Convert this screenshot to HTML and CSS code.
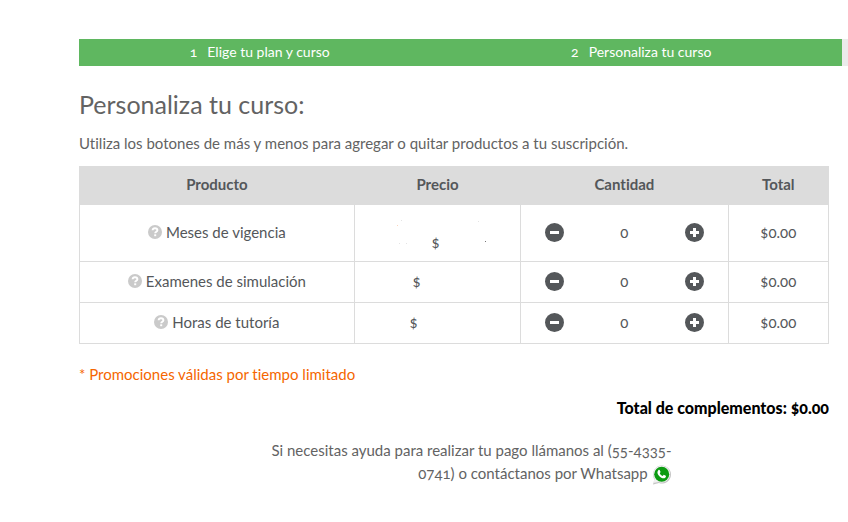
FILE: index.html
```html
<!DOCTYPE html>
<html lang="es">
<head>
<meta charset="utf-8">
<meta name="viewport" content="width=device-width, initial-scale=1">
<title>Personaliza tu curso</title>
<link rel="stylesheet" href="styles.css">
</head>
<body>
<svg class="sprite" aria-hidden="true">
  <symbol id="help" viewBox="0 0 14 14"><circle cx="7" cy="7" r="7" fill="#cacaca"/><path d="M4.6 5.3C4.7 3.8 5.8 3.2 7 3.2c1.400 0 2.400.8 2.400 2 0 1.500-2.200 1.500-2.200 3" fill="none" stroke="#fff" stroke-width="1.900"/><path d="M6.200 9.300h2v1.900h-2z" fill="#fff"/></symbol>
  <symbol id="minus" viewBox="0 0 19 19"><circle cx="9.500" cy="9.500" r="9.500" fill="#54575a"/><path d="M5 8h9v3H5z" fill="#fff"/></symbol>
  <symbol id="plus" viewBox="0 0 19 19"><circle cx="9.500" cy="9.500" r="9.500" fill="#54575a"/><path d="M8 5h3v3h3v3h-3v3H8v-3H5V8h3z" fill="#fff"/></symbol>
</svg>
<ol class="steps">
  <li class="step done"><span class="num">1</span>Elige tu plan y curso</li>
  <li class="step done"><span class="num">2</span>Personaliza tu curso</li>
  <li class="step"></li>
</ol>
<main class="content">
  <h1>Personaliza tu curso:</h1>
  <p class="intro">Utiliza los botones de más y menos para agregar o quitar productos a tu suscripción.</p>
  <table>
    <colgroup><col class="c-product"><col class="c-price"><col class="c-qty"><col class="c-total"></colgroup>
    <thead><tr><th>Producto</th><th>Precio</th><th>Cantidad</th><th>Total</th></tr></thead>
    <tbody>
      <tr class="tall">
        <td><svg class="help"><use href="#help"/></svg> Meses de vigencia</td>
        <td class="promo"><span class="price">$</span><svg class="specks" viewBox="0 0 100 34" aria-hidden="true"><path d="M10 4h1v1h-1zM87 5h1v1h-1zM8 27h1v1H8zM15 27h1v1h-1z" fill="#e4e4e4"/><path d="M6 9h1v1H6z" fill="#fbd5bd"/><path d="M94 25h1v1h-1z" fill="#777"/></svg></td>
        <td><div class="qty"><button aria-label="Quitar mes"><svg><use href="#minus"/></svg></button><output>0</output><button aria-label="Agregar mes"><svg><use href="#plus"/></svg></button></div></td>
        <td>$0.00</td>
      </tr>
      <tr>
        <td><svg class="help"><use href="#help"/></svg> Examenes de simulación</td>
        <td><span class="price medium">$</span></td>
        <td><div class="qty"><button aria-label="Quitar examen"><svg><use href="#minus"/></svg></button><output>0</output><button aria-label="Agregar examen"><svg><use href="#plus"/></svg></button></div></td>
        <td>$0.00</td>
      </tr>
      <tr>
        <td><svg class="help"><use href="#help"/></svg> Horas de tutoría</td>
        <td><span class="price wide">$</span></td>
        <td><div class="qty"><button aria-label="Quitar hora"><svg><use href="#minus"/></svg></button><output>0</output><button aria-label="Agregar hora"><svg><use href="#plus"/></svg></button></div></td>
        <td>$0.00</td>
      </tr>
    </tbody>
  </table>
  <p class="note">* Promociones válidas por tiempo limitado</p>
  <p class="sum">Total de complementos: $0.00</p>
  <p class="support">Si necesitas ayuda para realizar tu pago llámanos al (55-4335-<br>0741) o contáctanos por Whatsapp <svg class="wa" viewBox="0 0 20 20" aria-hidden="true"><path d="M1 19.500l1.500-5A9 9 0 1 1 7 18z" fill="#c4c4c4"/><path d="M1.200 18l1.400-4.400A8.400 8.400 0 1 1 6.600 16.900z" fill="#f0f0f0"/><circle cx="9.700" cy="9.200" r="7.500" fill="#0c9b12"/><path d="M6.300 5.200c.8-.7 1.400-.3 1.800.7l.5 1.200-.8 1.100c.6 1.400 1.500 2.200 2.900 2.700l1-1.100 2.100 1c.5.500-.1 2-1.300 2.400-3 .9-7.700-3.400-7-6.500z" fill="#fff"/></svg></p>
</main>
</body>
</html>
```
FILE: styles.css
```css
* { box-sizing: border-box; }
body {
  margin: 0;
  padding: 39px 0 24px 79px;
  background: #fff;
  color: #54575a;
  font: 15px/23px Lato, sans-serif;
  font-variant-numeric: oldstyle-nums;
  font-variant-ligatures: none;
}
h1, p, ol { margin: 0; padding: 0; }
.sprite { position: absolute; width: 0; height: 0; }
.steps {
  display: flex;
  overflow: hidden;
  list-style: none;
  font-size: 14px;
  line-height: 26px;
}
.step {
  flex: 0 0 calc((100% - 6px) / 2);
  height: 27px;
  padding-right: 20px;
  background: #ebebeb;
  text-align: center;
}
.done { background: #5fb760; color: #fff; }
.num { margin-right: 10px; }
.content { margin-right: 19px; }
h1 {
  margin-top: 22px;
  font-size: 25px;
  font-weight: 400;
  line-height: 32px;
  color: #636363;
}
.intro { margin-top: 12px; color: #636363; }
table {
  width: 100%;
  margin-top: 11px;
  border-collapse: collapse;
  table-layout: fixed;
}
.c-product { width: 36.700%; }
.c-price { width: 22.200%; }
.c-qty { width: 27.700%; }
th, td {
  height: 41px;
  padding: 0 0 2px;
  border: 1px solid #dcdcdc;
  text-align: center;
  vertical-align: middle;
}
th {
  height: 38px;
  background: #dcdcdc;
  font-weight: 700;
}
.tall td { height: 57px; }
.help { width: 14px; height: 14px; vertical-align: -1px; }
.price { display: inline-block; text-align: left; }
.medium { width: 50px; }
.wide { width: 56px; }
.tall .promo { position: relative; padding: 18px 4px 0 0; }
.specks { position: absolute; top: 11px; left: 36px; width: 100px; height: 34px; }
.qty {
  display: flex;
  align-items: center;
  justify-content: space-between;
  padding: 0 24px;
}
button {
  width: 19px;
  height: 19px;
  padding: 0;
  border: 0;
  background: none;
}
button svg { display: block; width: 19px; height: 19px; }
.note { margin-top: 19px; color: #f56600; }
.sum {
  margin-top: 10px;
  color: #000;
  font-size: 16px;
  font-weight: 900;
  text-align: right;
}
.support {
  width: 58%;
  margin: 20px auto 0;
  color: #636363;
  text-align: right;
}
.wa { width: 20px; height: 20px; vertical-align: -6px; }
```
